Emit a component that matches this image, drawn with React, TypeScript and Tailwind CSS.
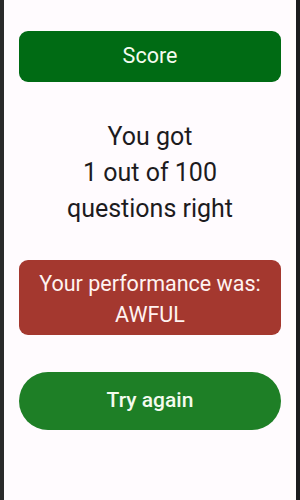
export default function App() {
  return (
    <div className="flex h-[500px] w-[300px] bg-[#1c1b1f] font-['Roboto',sans-serif]">
      <div className="w-[4px] bg-[#2a2a2a]" />
      <div className="flex flex-1 flex-col bg-[#fffbfe] px-[15px] pt-[31px]">
        <div className="flex h-[51px] items-center justify-center rounded-[9px] bg-[#006b14] text-[21.5px] text-[#f4fbef]">
          Score
        </div>
        <p className="mt-[37px] text-center text-[25px] leading-[36px] text-[#1d1b1e]">
          You got
          <br />1 out of 100
          <br />
          questions right
        </p>
        <div className="mt-[33px] flex h-[75px] flex-col items-center justify-center rounded-[9px] bg-[#a4382f] pt-[2px] text-center text-[21.5px] leading-[31px] text-[#fff3f1]">
          <span>Your performance was:</span>
          <span>AWFUL</span>
        </div>
        <button className="mt-[37px] h-[58px] rounded-full bg-[#1e7f26] text-[21px] font-medium text-[#f4fbef]">
          Try again
        </button>
      </div>
      <div className="w-[4px] bg-[#1c1b1f]" />
    </div>
  )
}
